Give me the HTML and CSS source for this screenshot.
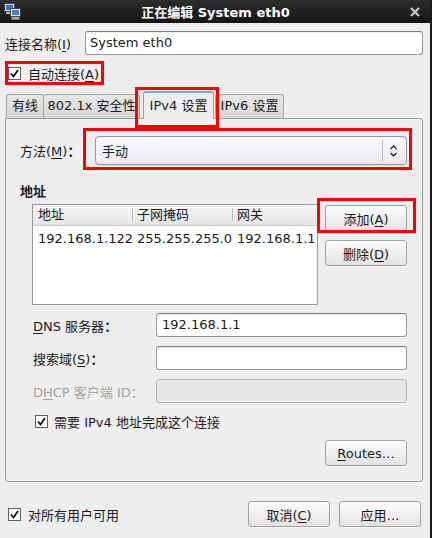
FILE: index.html
```html
<!DOCTYPE html>
<html lang="zh-CN">
<head>
    <meta charset="UTF-8">
    <title>正在编辑 System eth0</title>
    <link rel="stylesheet" href="styles.css">
</head>
<body>
    <div class="window">
        <div class="titlebar">
            <svg class="app-icon" viewBox="0 0 17 17">
                <rect x="0.5" y="0.5" width="10" height="8" fill="#d8dce4" stroke="#444"/>
                <rect x="2" y="2" width="7" height="5" fill="#3d6fc4"/>
                <rect x="2" y="9" width="7" height="2" fill="#bbb"/>
                <rect x="6.5" y="5.5" width="10" height="8" fill="#e4e7ee" stroke="#444"/>
                <rect x="8" y="7" width="7" height="5" fill="#4a7fd6"/>
                <rect x="7.5" y="14" width="8" height="2.5" fill="#c4c4c4" stroke="#555" stroke-width="0.6"/>
            </svg>
            <span class="title">正在编辑 System eth0</span>
            <svg class="close" viewBox="0 0 10 10">
                <path d="M1 1 L9 9 M9 1 L1 9" stroke="#c4c4c4" stroke-width="2.4"/>
            </svg>
        </div>

        <div class="content">
            <div class="name-row">
                <span class="name-label">连接名称(<u>I</u>)</span>
                <div class="entry">System eth0</div>
            </div>

            <div class="check-row">
                <span class="check"><svg viewBox="0 0 11 11"><path d="M2 5.5 L4.5 8.5 L9 2" fill="none" stroke="#111" stroke-width="1.8"/></svg></span>
                <span>自动连接(<u>A</u>)</span>
            </div>

            <div class="tabs">
                <div class="tab tab-wired">有线</div>
                <div class="tab tab-sec">802.1x 安全性</div>
                <div class="tab tab-active">IPv4 设置</div>
                <div class="tab tab-v6">IPv6 设置</div>
            </div>

            <div class="panel">
                <div class="method-row">
                    <span class="method-label">方法(<u>M</u>)<span class="colon">：</span></span>
                    <div class="combo">
                        <span class="combo-text">手动</span>
                        <span class="combo-sep"></span>
                        <svg class="combo-arrows" viewBox="0 0 9 14">
                            <path d="M1.5 5 L4.5 2 L7.5 5 M1.5 9 L4.5 12 L7.5 9" fill="none" stroke="#2a2a2a" stroke-width="1.4"/>
                        </svg>
                    </div>
                </div>

                <div class="section-title">地址</div>

                <div class="addr-block">
                    <div class="addr-list">
                        <div class="list-head">
                            <span>地址</span>
                            <span class="sep">子网掩码</span>
                            <span class="sep">网关</span>
                        </div>
                        <div class="list-row">
                            <span>192.168.1.122</span>
                            <span>255.255.255.0</span>
                            <span>192.168.1.1</span>
                        </div>
                    </div>
                    <div class="addr-buttons">
                        <button class="btn">添加(<u>A</u>)</button>
                        <button class="btn">删除(<u>D</u>)</button>
                    </div>
                </div>

                <div class="form">
                    <span class="form-label"><u>D</u>NS 服务器<span class="colon">：</span></span>
                    <div class="entry">192.168.1.1</div>
                    <span class="form-label">搜索域(<u>S</u>)<span class="colon">：</span></span>
                    <div class="entry"></div>
                    <span class="form-label disabled">D<u>H</u>CP 客户端 ID<span class="colon">：</span></span>
                    <div class="entry disabled"></div>
                </div>

                <div class="check-row inner">
                    <span class="check"><svg viewBox="0 0 11 11"><path d="M2 5.5 L4.5 8.5 L9 2" fill="none" stroke="#111" stroke-width="1.8"/></svg></span>
                    <span>需要 IPv4 地址完成这个连接</span>
                </div>

                <div class="routes-row">
                    <button class="btn"><u>R</u>outes…</button>
                </div>
            </div>

            <div class="footer">
                <div class="check-row bottom">
                    <span class="check"><svg viewBox="0 0 11 11"><path d="M2 5.5 L4.5 8.5 L9 2" fill="none" stroke="#111" stroke-width="1.8"/></svg></span>
                    <span>对所有用户可用</span>
                </div>
                <div class="footer-buttons">
                    <button class="btn">取消(<u>C</u>)</button>
                    <button class="btn">应用…</button>
                </div>
            </div>
        </div>

        <!-- red highlight boxes -->
        <div class="mark mark-auto"></div>
        <div class="mark mark-tab"></div>
        <div class="mark mark-method"></div>
        <div class="mark mark-add"></div>
    </div>
</body>
</html>
```

FILE: styles.css
```css
* {
    margin: 0;
    padding: 0;
    box-sizing: border-box;
}

body {
    width: 432px;
    height: 538px;
    overflow: hidden;
    background: #eeeeee;
    font-family: "DejaVu Sans", "Noto Sans CJK SC", sans-serif;
    font-size: 13px;
    color: #1a1a1a;
}

u {
    text-decoration: underline;
    text-underline-offset: 2px;
}

.colon {
    font-family: "Noto Sans CJK JP", sans-serif;
    font-weight: bold;
}

.window {
    position: relative;
    width: 432px;
    height: 538px;
    background: #eeeeee;
    border-right: 2px solid #1c1c1c;
}

/* title bar */
.titlebar {
    height: 23px;
    display: flex;
    align-items: center;
    padding: 0 10px 0 4px;
    background: linear-gradient(#2e2e2e, #151515);
    color: #ffffff;
}

.app-icon {
    width: 17px;
    height: 17px;
}

.title {
    flex: 1;
    text-align: center;
    font-weight: bold;
}

.close {
    width: 10px;
    height: 10px;
}

.content {
    padding: 8px 7px 0 5px;
}

/* entries */
.entry {
    height: 24px;
    line-height: 22px;
    padding-left: 4px;
    background: #ffffff;
    border: 1px solid #999999;
    border-top-color: #7e7e7e;
    border-radius: 3px;
    box-shadow: inset 0 1px 1px rgba(0, 0, 0, 0.08);
    white-space: nowrap;
}

.entry.disabled {
    background: #e6e6e6;
    border-color: #b5b5b5;
    box-shadow: none;
}

.name-row {
    display: flex;
    align-items: center;
}

.name-label {
    width: 80px;
}

.name-row .entry {
    flex: 1;
}

/* check rows */
.check-row {
    display: flex;
    align-items: center;
    height: 18px;
    margin-top: 9px;
    padding-left: 3px;
    gap: 7px;
}

.check {
    width: 13px;
    height: 13px;
    background: #ffffff;
    border: 1px solid #5e5e5e;
    display: flex;
    align-items: center;
    justify-content: center;
}

.check svg {
    width: 11px;
    height: 11px;
}

/* tabs */
.tabs {
    height: 27px;
    margin-top: 9px;
    padding-left: 1px;
    display: flex;
    align-items: flex-end;
}

.tab {
    height: 24px;
    line-height: 22px;
    text-align: center;
    white-space: nowrap;
    background: linear-gradient(#e8e8e8, #d6d6d6);
    border: 1px solid #a3a3a3;
    border-bottom: none;
    border-radius: 3px 3px 0 0;
}

.tab-wired {
    width: 38px;
}

.tab-sec {
    width: 96px;
    border-left: none;
}

.tab-active {
    position: relative;
    z-index: 1;
    width: 71px;
    height: 28px;
    margin-left: 3px;
    margin-bottom: -1px;
    line-height: 25px;
    background: #eeeeee;
    border-color: #9c9c9c;
    border-top: 2px solid #8aa3c9;
}

.tab-v6 {
    width: 69px;
    margin-left: 1px;
}

/* notebook page */
.panel {
    border: 1px solid #9e9e9e;
    border-radius: 0 3px 3px 3px;
    padding: 17px 15px 15px 14px;
    background: #eeeeee;
}

.method-row {
    display: flex;
    align-items: center;
}

.method-label {
    width: 75px;
}

.combo {
    flex: 1;
    height: 29px;
    display: flex;
    align-items: center;
    padding-left: 6px;
    background: linear-gradient(#f9fafc, #e8eaee);
    border: 1px solid #8b98b0;
    border-radius: 4px;
    box-shadow: 0 1px 1px rgba(0, 0, 0, 0.08);
}

.combo-text {
    flex: 1;
}

.combo-sep {
    width: 1px;
    height: 21px;
    background: #b9bec8;
}

.combo-arrows {
    width: 9px;
    height: 14px;
    margin: 0 8px 0 6px;
}

.section-title {
    margin-top: 19px;
    line-height: 16px;
    font-weight: bold;
}

.addr-block {
    display: flex;
    gap: 7px;
    margin-top: 4px;
    padding-left: 12px;
}

.addr-list {
    width: 286px;
    height: 101px;
    background: #ffffff;
    border: 1px solid #9a9a9a;
}

.list-head,
.list-row {
    display: grid;
    grid-template-columns: 99px 100px 1fr;
}

.list-head {
    height: 21px;
    line-height: 20px;
    background: linear-gradient(#f7f7f7, #e4e4e4);
    border-bottom: 1px solid #c6c6c6;
}

.list-head span,
.list-row span {
    padding-left: 5px;
    white-space: nowrap;
    overflow: hidden;
}

.list-head .sep {
    position: relative;
}

.list-head .sep::before {
    content: "";
    position: absolute;
    left: 0;
    top: 3px;
    bottom: 4px;
    width: 1px;
    background: #bdbdbd;
}

.list-row {
    height: 21px;
    line-height: 21px;
    margin-top: 2px;
}

.addr-buttons {
    display: flex;
    flex-direction: column;
    gap: 9px;
    padding-top: 1px;
}

.btn {
    width: 82px;
    height: 26px;
    font-family: inherit;
    font-size: 13px;
    color: #1a1a1a;
    background: linear-gradient(#fcfcfc, #e2e2e2);
    border: 1px solid #a0a0a0;
    border-radius: 3px;
    box-shadow: 0 1px 0 rgba(255, 255, 255, 0.6);
}

.form {
    display: grid;
    grid-template-columns: 123px 251px;
    grid-auto-rows: 24px;
    row-gap: 9px;
    align-items: center;
    margin-top: 8px;
    padding-left: 13px;
}

.form .entry {
    padding-left: 5px;
}

.form-label.disabled {
    color: #a2a2a2;
}

.form-label.disabled .colon {
    font-weight: normal;
}

.check-row.inner {
    padding-left: 15px;
    gap: 6px;
}

.routes-row {
    display: flex;
    justify-content: flex-end;
    margin-top: 10px;
}

/* dialog buttons */
.footer {
    display: flex;
    align-items: center;
    justify-content: space-between;
    margin-top: 19px;
    padding-right: 2px;
}

.check-row.bottom {
    margin-top: 0;
}

.footer-buttons {
    display: flex;
    gap: 9px;
}

/* annotation boxes */
.mark {
    position: absolute;
    border: 3px solid #ff0000;
}

.mark-auto {
    left: 5px;
    top: 61px;
    width: 99px;
    height: 24px;
}

.mark-tab {
    left: 135px;
    top: 87px;
    width: 84px;
    height: 41px;
}

.mark-method {
    left: 83px;
    top: 128px;
    width: 329px;
    height: 42px;
}

.mark-add {
    left: 317px;
    top: 198px;
    width: 99px;
    height: 35px;
}
```
